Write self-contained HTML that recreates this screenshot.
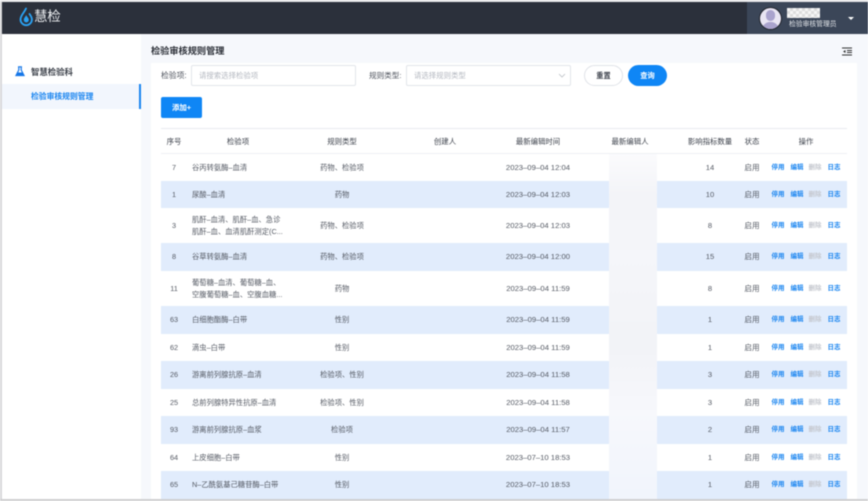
<!DOCTYPE html>
<html lang="zh"><head><meta charset="utf-8"><title>检验审核规则管理</title>
<style>
html,body{margin:0;padding:0}
body{width:868px;height:501px;overflow:hidden;background:#fff;position:relative;font-family:"Liberation Sans","Noto Sans CJK SC",sans-serif;color:#555a64}
#w{position:absolute;left:0;top:0;width:868px;height:501px;overflow:hidden;filter:blur(.4px)}
.a{position:absolute;white-space:nowrap}
.r{position:absolute;left:161px;width:686px;background:#fff}
.r.b{background:#e1ecfc}
.r>div{position:absolute;top:0;bottom:0;display:flex;align-items:center;justify-content:center;font-size:7.3px;line-height:11.5px;white-space:nowrap}
.n{left:0;width:26px}
.i{left:31px;width:120px;justify-content:flex-start!important}
.t{left:121px;width:120px}
.d{left:307px;width:140px;font-size:7.7px!important}
.c{left:519px;width:60px;font-size:7.6px!important}
.s{left:571px;width:40px;font-size:7.6px!important}
.o1,.o2,.o3,.o4{font-weight:bold;font-size:6.5px!important;color:#1a85f0;width:14px}
.o1{left:610px}.o2{left:629px}.o3{left:647px;color:#c4c7ce!important}.o4{left:666px}
.h{position:absolute;font-size:7.4px;color:#3d424c;top:136px;transform:translateX(-50%);white-space:nowrap}
</style></head><body><div id="w">
<div class="a" style="left:0;top:0;width:868px;height:2px;background:#e8e8ea"></div>
<div class="a" style="left:0;top:2px;width:2px;height:499px;background:#d8d8da"></div>
<div class="a" style="left:0;top:499px;width:868px;height:2px;background:#cfcfd1"></div>

<div class="a" style="left:2px;top:2px;width:866px;height:32px;background:#2b303b"></div>
<div class="a" style="left:747px;top:2px;width:121px;height:32px;background:#3b4658"></div>
<svg class="a" style="left:19px;top:7px" width="15" height="20" viewBox="0 0 15 20"><path d="M7 1.500C5 6 1.500 8.500 1.500 12.500a5.700 5.700 0 0 0 11.400 0C12.900 10 11.500 8.500 10.500 7" fill="none" stroke="#2aa3f5" stroke-width="1.800" stroke-linecap="round"/><path d="M7.200 8C6.300 10 4.800 11 4.800 13a2.500 2.500 0 0 0 5 0C9.800 11 8 10 7.200 8Z" fill="#2aa3f5"/></svg>
<div class="a" style="left:34px;top:7px;font-size:13.500px;line-height:20px;color:#eef0f3;letter-spacing:-.3px">慧检</div>

<div class="a" style="left:759px;top:7px;width:21px;height:21px;border-radius:50%;background:#e9e5f3;border:1px solid #20242c;box-sizing:content-box;overflow:hidden">
<div style="position:absolute;left:6px;top:2px;width:9px;height:11px;border-radius:5px;background:#aaa3cd"></div>
<div style="position:absolute;left:2px;top:14px;width:17px;height:12px;border-radius:8px 8px 0 0;background:#aaa3cd"></div></div>
<div class="a" style="left:787px;top:8px;width:33px;height:10px;background:repeating-conic-gradient(#dcdcdc 0 25%,#f6f6f6 0 50%) 0 0/6px 6px"></div>
<div class="a" style="left:789px;top:19px;font-size:6.800px;line-height:11px;color:#e3e6ea">检验审核管理员</div>
<div class="a" style="left:848px;top:17px;width:0;height:0;border-left:3px solid transparent;border-right:3px solid transparent;border-top:3.500px solid #fff"></div>

<div class="a" style="left:2px;top:34px;width:139px;height:465px;background:#fff"></div>
<div class="a" style="left:141px;top:34px;width:727px;height:465px;background:#f6f8fc"></div>
<svg class="a" style="left:15px;top:66px" width="10" height="11" viewBox="0 0 10 11"><path d="M3 .8h4M3.800 1v3L1 9.500h8L6.200 4V1" fill="none" stroke="#1677e8" stroke-width="1.200"/><path d="M2.500 6.500h5L9 10H1Z" fill="#1677e8"/></svg>
<div class="a" style="left:31px;top:66px;font-size:8.400px;line-height:12px;font-weight:bold;color:#3c414a">智慧检验科</div>
<div class="a" style="left:2px;top:84px;width:137px;height:25px;background:#f2f6fd"></div>
<div class="a" style="left:139px;top:84px;width:2px;height:25px;background:#1a85f0"></div>
<div class="a" style="left:31px;top:91px;font-size:7.800px;line-height:12px;font-weight:bold;color:#1a85f0">检验审核规则管理</div>

<div class="a" style="left:151px;top:45px;font-size:9.200px;line-height:13px;font-weight:bold;color:#2d3139">检验审核规则管理</div>
<svg class="a" style="left:842px;top:47px" width="10" height="9" viewBox="0 0 10 9"><path d="M0 1h10M5 3.500h5M5 5.500h5M0 8h10" stroke="#333" stroke-width="1"/><path d="M3.500 3v3L1 4.500Z" fill="#333"/></svg>

<div class="a" style="left:151px;top:63px;width:706px;height:436px;background:#fff"></div>
<div class="a" style="left:161px;top:70px;font-size:7.800px;line-height:12px;color:#4d525c">检验项:</div>
<div class="a" style="left:191px;top:65px;width:165px;height:21px;box-sizing:border-box;border:1px solid #e2e5ea;border-radius:2px;background:#fff"></div>
<div class="a" style="left:199px;top:70px;font-size:7.400px;line-height:12px;color:#b4b8c0">请搜索选择检验项</div>
<div class="a" style="left:369px;top:70px;font-size:7.600px;line-height:12px;color:#4d525c">规则类型:</div>
<div class="a" style="left:406px;top:65px;width:165px;height:21px;box-sizing:border-box;border:1px solid #e2e5ea;border-radius:2px;background:#fff"></div>
<div class="a" style="left:414px;top:70px;font-size:7.400px;line-height:12px;color:#b4b8c0">请选择规则类型</div>
<svg class="a" style="left:558px;top:73px" width="8" height="5" viewBox="0 0 8 5"><path d="M1 1l3 3 3-3" fill="none" stroke="#bcc0c6" stroke-width=".8"/></svg>
<div class="a" style="left:584px;top:65px;width:39px;height:21px;box-sizing:border-box;border:1px solid #e0e3e8;border-radius:11px;background:#fff;text-align:center;font-size:7.200px;line-height:19px;font-weight:bold;color:#3d424c">重置</div>
<div class="a" style="left:628px;top:65px;width:39px;height:21px;border-radius:11px;background:#0f86f5;text-align:center;font-size:7.200px;line-height:21px;font-weight:bold;color:#fff">查询</div>
<div class="a" style="left:161px;top:97px;width:41px;height:21px;border-radius:2px;background:#0f86f5;text-align:center;font-size:7.400px;line-height:21px;font-weight:bold;color:#fff">添加+</div>

<div class="a" style="left:161px;top:128px;width:686px;height:1px;background:#e8ebf0"></div>
<div class="a" style="left:161px;top:153px;width:686px;height:1px;background:#eef0f4"></div>
<div class="h" style="left:174px">序号</div><div class="h" style="left:238px">检验项</div><div class="h" style="left:342px">规则类型</div><div class="h" style="left:445px">创建人</div><div class="h" style="left:538px">最新编辑时间</div><div class="h" style="left:630px">最新编辑人</div><div class="h" style="left:710px">影响指标数量</div><div class="h" style="left:752px">状态</div><div class="h" style="left:806px">操作</div>

<div class="r" style="top:154px;height:27px"><div class="n">7</div><div class="i">谷丙转氨酶–血清</div><div class="t">药物、检验项</div><div class="d">2023–09–04 12:04</div><div class="c">14</div><div class="s">启用</div><div class="o1">停用</div><div class="o2">编辑</div><div class="o3">删除</div><div class="o4">日志</div></div>
<div class="r b" style="top:181px;height:27px"><div class="n">1</div><div class="i">尿酸–血清</div><div class="t">药物</div><div class="d">2023–09–04 12:03</div><div class="c">10</div><div class="s">启用</div><div class="o1">停用</div><div class="o2">编辑</div><div class="o3">删除</div><div class="o4">日志</div></div>
<div class="r" style="top:208px;height:35px"><div class="n">3</div><div class="i">肌酐–血清、肌酐–血、急诊<br>肌酐–血、血清肌酐测定(C...</div><div class="t">药物、检验项</div><div class="d">2023–09–04 12:03</div><div class="c">8</div><div class="s">启用</div><div class="o1">停用</div><div class="o2">编辑</div><div class="o3">删除</div><div class="o4">日志</div></div>
<div class="r b" style="top:243px;height:28px"><div class="n">8</div><div class="i">谷草转氨酶–血清</div><div class="t">药物、检验项</div><div class="d">2023–09–04 12:00</div><div class="c">15</div><div class="s">启用</div><div class="o1">停用</div><div class="o2">编辑</div><div class="o3">删除</div><div class="o4">日志</div></div>
<div class="r" style="top:271px;height:35px"><div class="n">11</div><div class="i">葡萄糖–血清、葡萄糖–血、<br>空腹葡萄糖–血、空腹血糖...</div><div class="t">药物</div><div class="d">2023–09–04 11:59</div><div class="c">8</div><div class="s">启用</div><div class="o1">停用</div><div class="o2">编辑</div><div class="o3">删除</div><div class="o4">日志</div></div>
<div class="r b" style="top:306px;height:28px"><div class="n">63</div><div class="i">白细胞酯酶–白带</div><div class="t">性别</div><div class="d">2023–09–04 11:59</div><div class="c">1</div><div class="s">启用</div><div class="o1">停用</div><div class="o2">编辑</div><div class="o3">删除</div><div class="o4">日志</div></div>
<div class="r" style="top:334px;height:27px"><div class="n">62</div><div class="i">滴虫–白带</div><div class="t">性别</div><div class="d">2023–09–04 11:59</div><div class="c">1</div><div class="s">启用</div><div class="o1">停用</div><div class="o2">编辑</div><div class="o3">删除</div><div class="o4">日志</div></div>
<div class="r b" style="top:361px;height:28px"><div class="n">26</div><div class="i">游离前列腺抗原–血清</div><div class="t">检验项、性别</div><div class="d">2023–09–04 11:58</div><div class="c">3</div><div class="s">启用</div><div class="o1">停用</div><div class="o2">编辑</div><div class="o3">删除</div><div class="o4">日志</div></div>
<div class="r" style="top:389px;height:27px"><div class="n">25</div><div class="i">总前列腺特异性抗原–血清</div><div class="t">检验项、性别</div><div class="d">2023–09–04 11:58</div><div class="c">3</div><div class="s">启用</div><div class="o1">停用</div><div class="o2">编辑</div><div class="o3">删除</div><div class="o4">日志</div></div>
<div class="r b" style="top:416px;height:28px"><div class="n">93</div><div class="i">游离前列腺抗原–血浆</div><div class="t">检验项</div><div class="d">2023–09–04 11:57</div><div class="c">2</div><div class="s">启用</div><div class="o1">停用</div><div class="o2">编辑</div><div class="o3">删除</div><div class="o4">日志</div></div>
<div class="r" style="top:444px;height:27px"><div class="n">64</div><div class="i">上皮细胞–白带</div><div class="t">性别</div><div class="d">2023–07–10 18:53</div><div class="c">1</div><div class="s">启用</div><div class="o1">停用</div><div class="o2">编辑</div><div class="o3">删除</div><div class="o4">日志</div></div>
<div class="r b" style="top:471px;height:28px"><div class="n">65</div><div class="i">N–乙酰氨基己糖苷酶–白带</div><div class="t">性别</div><div class="d">2023–07–10 18:53</div><div class="c">1</div><div class="s">启用</div><div class="o1">停用</div><div class="o2">编辑</div><div class="o3">删除</div><div class="o4">日志</div></div>

<div class="a" style="left:609px;top:154px;width:48px;height:345px;background:linear-gradient(#fbfbfd,#f3f4f8 12%,#f5f6fa 30%,#f2f3f7 55%,#f7f8fc 75%,#f1f5fc)"></div>
</div></body></html>
